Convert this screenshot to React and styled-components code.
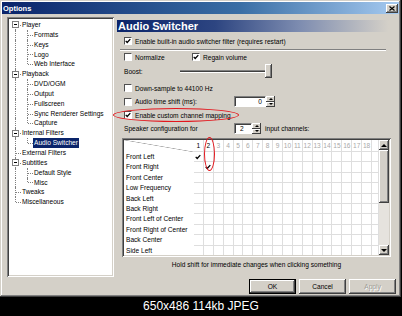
import styled, { createGlobalStyle } from "styled-components";

const GlobalStyle = createGlobalStyle`
  html, body {
    margin: 0;
    padding: 0;
    background: #000;
  }
  body {
    width: 402px;
    height: 316px;
    overflow: hidden;
    font-family: "Liberation Sans", Arial, sans-serif;
  }
`;

const raised = `
  box-shadow: inset -1px -1px #404040, inset 1px 1px #fff,
    inset -2px -2px #808080, inset 2px 2px #d4d0c8;
`;

const sunken = `
  box-shadow: inset 1px 1px #808080, inset -1px -1px #fff,
    inset 2px 2px #404040, inset -2px -2px #d4d0c8;
`;

const Screen = styled.div`
  width: 402px;
  height: 316px;
  display: flex;
  flex-direction: column;
  background: #000;
`;

const Window = styled.div`
  width: 401px;
  height: 297px;
  flex: none;
  box-sizing: border-box;
  padding: 2px;
  display: flex;
  flex-direction: column;
  background: #d4d0c8;
  box-shadow: inset -1px -1px #404040, inset 1px 1px #d4d0c8,
    inset -2px -2px #808080, inset 2px 2px #fff;
`;

const TitleBar = styled.div`
  height: 12px;
  flex: none;
  display: flex;
  align-items: center;
  justify-content: space-between;
  padding: 0 1px;
  background: linear-gradient(90deg, #0a246a 0%, #3a6ea5 60%, #a6caf0 100%);
`;

const TitleText = styled.span`
  color: #fff;
  font-weight: bold;
  font-size: 7.5px;
`;

const CloseButton = styled.span`
  width: 12px;
  height: 9px;
  box-sizing: border-box;
  display: flex;
  align-items: center;
  justify-content: center;
  background: #d4d0c8;
  ${raised}
`;

const Body = styled.div`
  height: 263px;
  box-sizing: border-box;
  display: flex;
  gap: 3px;
  padding: 3px 0 0 5px;
`;

/* ---------- tree ---------- */

const Tree = styled.div`
  width: 107px;
  height: 260px;
  flex: none;
  box-sizing: border-box;
  padding: 3px 0 0 2px;
  background: #fff;
  font-size: 6.6px;
  ${sunken}
`;

const TreeRow = styled.div`
  height: 9.85px;
  display: flex;
  align-items: stretch;
`;

const Guide = styled.span`
  position: relative;
  flex: none;
  width: 12px;
  &::before {
    content: "";
    position: absolute;
    left: 6px;
    top: ${(p) => (p.$up ? "0" : "50%")};
    bottom: ${(p) => (p.$down ? "0" : "50%")};
    border-left: 1px dotted #808080;
  }
  &::after {
    content: "";
    display: ${(p) => (p.$stub ? "block" : "none")};
    position: absolute;
    left: 7px;
    right: 0;
    top: 50%;
    border-top: 1px dotted #808080;
  }
`;

const Expander = styled.span`
  position: absolute;
  left: 3px;
  top: calc(50% - 3.5px);
  width: 7px;
  height: 7px;
  box-sizing: border-box;
  border: 1px solid #808080;
  background: #fff;
  z-index: 1;
  &::after {
    content: "";
    position: absolute;
    left: 1px;
    right: 1px;
    top: 2px;
    height: 1px;
    background: #000;
  }
`;

const NodeLabel = styled.span`
  padding: 0 1px;
  line-height: 9.85px;
  white-space: nowrap;
  color: ${(p) => (p.$selected ? "#fff" : "#000")};
  background: ${(p) => (p.$selected ? "#0a246a" : "transparent")};
`;

/* ---------- page ---------- */

const Page = styled.div`
  flex: 1;
  display: flex;
  flex-direction: column;
  margin-top: 3px;
  padding-right: 2px;
  font-size: 6.6px;
`;

const PageHeader = styled.div`
  height: 12px;
  flex: none;
  line-height: 12px;
  padding-left: 1px;
  color: #fff;
  font-weight: bold;
  font-size: 11px;
  background: linear-gradient(
    90deg,
    #0a246a 0%,
    #2d4581 35%,
    #7d8cb0 65%,
    #d4d0c8 97%
  );
`;

const Field = styled.div`
  position: relative;
  flex: none;
  display: flex;
  align-items: center;
  height: ${(p) => p.$h || 10}px;
  margin-top: ${(p) => p.$mt || 0}px;
  padding-left: 7px;
  white-space: nowrap;
`;

const Separator = styled.div`
  flex: none;
  margin: 3px 11px 0 3px;
  border-top: 1px solid #808080;
  border-bottom: 1px solid #fff;
`;

const CheckItem = styled.span`
  display: flex;
  align-items: center;
  flex: none;
  width: ${(p) => (p.$w ? `${p.$w}px` : "auto")};
`;

const Box = styled.span`
  width: 8px;
  height: 8px;
  flex: none;
  box-sizing: border-box;
  display: flex;
  align-items: center;
  justify-content: center;
  border: 1px solid;
  border-color: #505050 #fff #fff #505050;
  background: #fff;
`;

const Caption = styled.span`
  margin-left: 3px;
`;

const FieldLabel = styled.span`
  flex: none;
  width: ${(p) => p.$w}px;
`;

const Slider = styled.div`
  position: relative;
  width: 92px;
  height: 14px;
  &::before {
    content: "";
    position: absolute;
    left: 0;
    right: 3px;
    top: 6px;
    height: 1px;
    background: #404040;
    border-top: 1px solid #808080;
    border-bottom: 1px solid #fff;
  }
`;

const Thumb = styled.span`
  position: absolute;
  right: 0;
  top: 0;
  width: 7px;
  height: 14px;
  background: #d4d0c8;
  ${raised}
`;

const Spin = styled.div`
  display: flex;
  flex: none;
  height: 11px;
`;

const SpinEdit = styled.div`
  width: ${(p) => p.$w}px;
  box-sizing: border-box;
  padding: 0 3px 0 5px;
  line-height: 9px;
  text-align: ${(p) => p.$align};
  background: #fff;
  border: 1px solid;
  border-color: #808080 #fff #fff #808080;
  box-shadow: inset 1px 1px #404040;
`;

const SpinButtons = styled.div`
  width: 9px;
  display: flex;
  flex-direction: column;
`;

const SpinButton = styled.div`
  flex: 1;
  display: flex;
  align-items: center;
  justify-content: center;
  background: #d4d0c8;
  box-shadow: inset -1px -1px #404040, inset 1px 1px #fff;
  &::before {
    content: "";
    border-left: 2px solid transparent;
    border-right: 2px solid transparent;
    ${(p) =>
      p.$down ? "border-top: 2px solid #000;" : "border-bottom: 2px solid #000;"}
  }
`;

const SideText = styled.span`
  margin-left: 4px;
`;

const Oval = styled.span`
  position: absolute;
  left: ${(p) => p.$x}px;
  top: ${(p) => p.$y}px;
  width: ${(p) => p.$w}px;
  height: ${(p) => p.$h}px;
  box-sizing: border-box;
  border: 1.5px solid #e3161d;
  border-radius: 50%;
  pointer-events: none;
  z-index: 2;
`;

/* ---------- channel grid ---------- */

const GridFrame = styled.div`
  position: relative;
  flex: none;
  width: 269px;
  height: 119px;
  margin: 4px 0 0 5px;
  box-sizing: border-box;
  padding: 2px;
  display: flex;
  background: #fff;
  ${sunken}
`;

const GridViewport = styled.div`
  flex: 1;
  overflow: hidden;
  display: grid;
  grid-template-columns: 70px repeat(18, 9.9px) 1fr;
  grid-template-rows: 12px;
  grid-auto-rows: 10.4px;
  align-content: start;
`;

const CornerCell = styled.div`
  background: linear-gradient(
    to top right,
    transparent calc(50% - 0.6px),
    #a8a8a8 50%,
    transparent calc(50% + 0.6px)
  );
`;

const HeadCell = styled.div`
  display: flex;
  align-items: center;
  justify-content: center;
  border-right: 1px solid #dedede;
  border-bottom: 1px solid #dedede;
  color: ${(p) => (p.$active ? "#000" : "#a9a9a9")};
`;

const RowLabel = styled.div`
  padding-left: 2px;
  line-height: 10.4px;
  white-space: nowrap;
  overflow: hidden;
`;

const Cell = styled.div`
  display: flex;
  align-items: center;
  justify-content: center;
  border-right: 1px solid #dedede;
  border-bottom: 1px solid #dedede;
`;

const ScrollBar = styled.div`
  width: 10px;
  flex: none;
  display: flex;
  flex-direction: column;
  background: #e6e3de;
`;

const ScrollArrow = styled.div`
  height: 10px;
  flex: none;
  display: flex;
  align-items: center;
  justify-content: center;
  background: #d4d0c8;
  ${raised}
  &::before {
    content: "";
    border-left: 3px solid transparent;
    border-right: 3px solid transparent;
    ${(p) =>
      p.$down ? "border-top: 3px solid #000;" : "border-bottom: 3px solid #000;"}
  }
`;

const ScrollThumb = styled.div`
  height: 53px;
  flex: none;
  background: #d4d0c8;
  ${raised}
`;

const ScrollTrack = styled.div`
  flex: 1;
`;

const Hint = styled.div`
  flex: none;
  width: 269px;
  height: 10px;
  margin: 3px 0 0 5px;
  line-height: 10px;
  text-align: center;
  white-space: nowrap;
`;

/* ---------- footer ---------- */

const Footer = styled.div`
  display: flex;
  justify-content: flex-end;
  gap: 3px;
  margin-top: 2px;
  padding-right: 3px;
`;

const Button = styled.button`
  width: ${(p) => p.$w}px;
  height: 15px;
  padding: 0;
  box-sizing: border-box;
  font: 6.6px "Liberation Sans", Arial, sans-serif;
  color: ${(p) => (p.disabled ? "#a09d97" : "#000")};
  text-shadow: ${(p) => (p.disabled ? "1px 1px #fff" : "none")};
  background: #d4d0c8;
  border: ${(p) => (p.$default ? "1px solid #000" : "none")};
  ${raised}
`;

const ThumbCaption = styled.div`
  flex: 1;
  color: #fff;
  font-size: 12px;
  line-height: 19px;
  text-align: center;
`;

/* ---------- data ---------- */

const treeData = [
  { label: "Player", children: ["Formats", "Keys", "Logo", "Web Interface"] },
  {
    label: "Playback",
    children: ["DVD/OGM", "Output", "Fullscreen", "Sync Renderer Settings", "Capture"],
  },
  { label: "Internal Filters", children: ["Audio Switcher"] },
  { label: "External Filters" },
  { label: "Subtitles", children: ["Default Style", "Misc"] },
  { label: "Tweaks" },
  { label: "Miscellaneous" },
];

const channels = [
  "Front Left",
  "Front Right",
  "Front Center",
  "Low Frequency",
  "Back Left",
  "Back Right",
  "Front Left of Center",
  "Front Right of Center",
  "Back Center",
  "Side Left",
];

const columns = Array.from({ length: 18 }, (_, i) => i + 1);

function flattenTree(data) {
  const rows = [];
  data.forEach((node, i) => {
    const last = i === data.length - 1;
    rows.push({ label: node.label, level: 0, first: i === 0, last, open: !!node.children });
    (node.children || []).forEach((child, j) => {
      rows.push({
        label: child,
        level: 1,
        parentLast: last,
        childLast: j === node.children.length - 1,
      });
    });
  });
  return rows;
}

function Check({ size = 6 }) {
  return (
    <svg width={size} height={size} viewBox="0 0 6 6">
      <path d="M0.7 2.9 L2.2 4.5 L5.3 1.1" fill="none" stroke="#000" strokeWidth="1.3" />
    </svg>
  );
}

function CheckBox({ checked, children, w }) {
  return (
    <CheckItem $w={w}>
      <Box>{checked && <Check />}</Box>
      <Caption>{children}</Caption>
    </CheckItem>
  );
}

function SpinBox({ value, w, align }) {
  return (
    <Spin>
      <SpinEdit $w={w} $align={align}>
        {value}
      </SpinEdit>
      <SpinButtons>
        <SpinButton />
        <SpinButton $down />
      </SpinButtons>
    </Spin>
  );
}

export default function App() {
  const treeRows = flattenTree(treeData);
  const checks = { 0: 1, 1: 2 };

  return (
    <Screen>
      <GlobalStyle />
      <Window>
        <TitleBar>
          <TitleText>Options</TitleText>
          <CloseButton>
            <svg width="6" height="5" viewBox="0 0 6 5">
              <path d="M0.5 0.5 L5.5 4.5 M5.5 0.5 L0.5 4.5" stroke="#000" strokeWidth="1.2" />
            </svg>
          </CloseButton>
        </TitleBar>

        <Body>
          <Tree>
            {treeRows.map((row) =>
              row.level === 0 ? (
                <TreeRow key={row.label}>
                  <Guide $up={!row.first} $down={!row.last} $stub>
                    {row.open && <Expander />}
                  </Guide>
                  <NodeLabel>{row.label}</NodeLabel>
                </TreeRow>
              ) : (
                <TreeRow key={row.label}>
                  <Guide $up $down={!row.parentLast} />
                  <Guide $up $down={!row.childLast} $stub />
                  <NodeLabel $selected={row.label === "Audio Switcher"}>{row.label}</NodeLabel>
                </TreeRow>
              )
            )}
          </Tree>

          <Page>
            <PageHeader>Audio Switcher</PageHeader>

            <Field $mt={4}>
              <CheckBox checked>Enable built-in audio switcher filter (requires restart)</CheckBox>
            </Field>
            <Separator />

            <Field $mt={1}>
              <CheckBox w={68}>Normalize</CheckBox>
              <CheckBox checked>Regain volume</CheckBox>
            </Field>

            <Field $mt={2} $h={14}>
              <FieldLabel $w={56}>Boost:</FieldLabel>
              <Slider>
                <Thumb />
              </Slider>
            </Field>

            <Field $mt={5}>
              <CheckBox>Down-sample to 44100 Hz</CheckBox>
            </Field>

            <Field $mt={3} $h={11}>
              <CheckBox w={110}>Audio time shift (ms):</CheckBox>
              <SpinBox value="0" w={32} align="right" />
            </Field>

            <Field $mt={3}>
              <CheckBox checked>Enable custom channel mapping</CheckBox>
              <Oval $x={-4} $y={-2} $w={126} $h={14} />
            </Field>

            <Field $mt={3} $h={11}>
              <FieldLabel $w={110}>Speaker configuration for</FieldLabel>
              <SpinBox value="2" w={18} align="left" />
              <SideText>input channels:</SideText>
            </Field>

            <GridFrame>
              <GridViewport>
                <CornerCell />
                {columns.map((c) => (
                  <HeadCell key={c} $active={c <= 2}>
                    {c}
                  </HeadCell>
                ))}
                <HeadCell />
                {channels.map((name, r) => [
                  <RowLabel key={name}>{name}</RowLabel>,
                  ...columns.map((c) => (
                    <Cell key={`${name}-${c}`}>{checks[r] === c && <Check size={6} />}</Cell>
                  )),
                  <Cell key={`${name}-end`} />,
                ])}
              </GridViewport>
              <ScrollBar>
                <ScrollArrow />
                <ScrollThumb />
                <ScrollTrack />
                <ScrollArrow $down />
              </ScrollBar>
              <Oval $x={82} $y={-1} $w={11} $h={34} />
            </GridFrame>

            <Hint>Hold shift for immediate changes when clicking something</Hint>
          </Page>
        </Body>

        <Footer>
          <Button $w={47} $default>
            OK
          </Button>
          <Button $w={47}>Cancel</Button>
          <Button $w={47} disabled>
            Apply
          </Button>
        </Footer>
      </Window>
      <ThumbCaption>650x486 114kb JPEG</ThumbCaption>
    </Screen>
  );
}
